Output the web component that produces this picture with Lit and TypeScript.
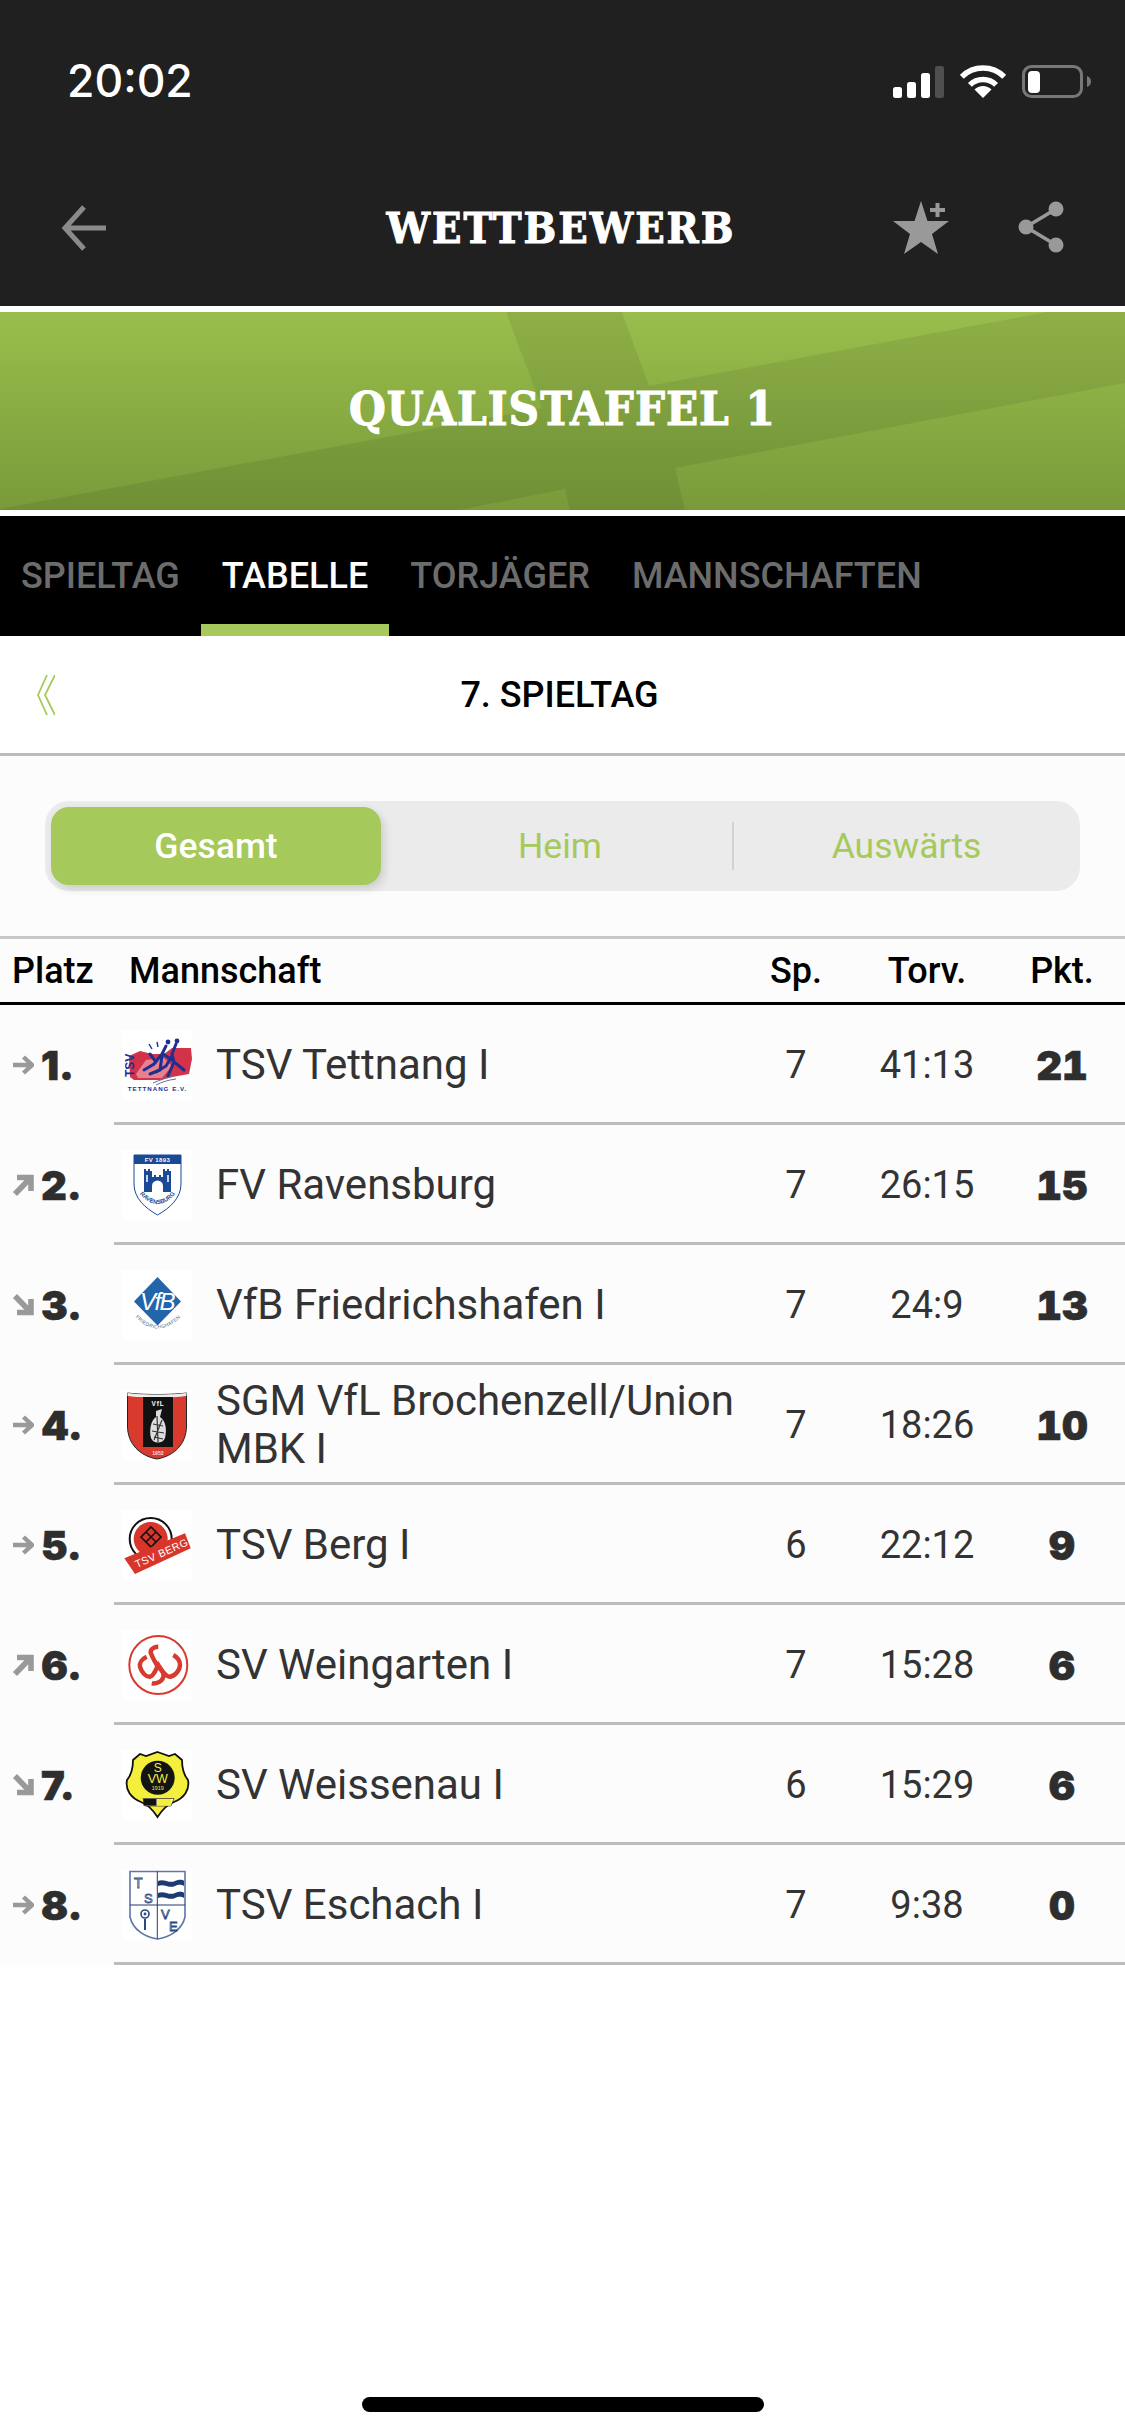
import { LitElement, html, css, svg } from "lit";
import { customElement } from "lit/decorators.js";

type Row = { rank: number; trend: "same" | "up" | "down"; name: string; sp: number; tor: string; pkt: number };

const rows: Row[] = [
  { rank: 1, trend: "same", name: "TSV Tettnang I", sp: 7, tor: "41:13", pkt: 21 },
  { rank: 2, trend: "up", name: "FV Ravensburg", sp: 7, tor: "26:15", pkt: 15 },
  { rank: 3, trend: "down", name: "VfB Friedrichshafen I", sp: 7, tor: "24:9", pkt: 13 },
  { rank: 4, trend: "same", name: "SGM VfL Brochenzell/Union MBK I", sp: 7, tor: "18:26", pkt: 10 },
  { rank: 5, trend: "same", name: "TSV Berg I", sp: 6, tor: "22:12", pkt: 9 },
  { rank: 6, trend: "up", name: "SV Weingarten I", sp: 7, tor: "15:28", pkt: 6 },
  { rank: 7, trend: "down", name: "SV Weissenau I", sp: 6, tor: "15:29", pkt: 6 },
  { rank: 8, trend: "same", name: "TSV Eschach I", sp: 7, tor: "9:38", pkt: 0 },
];

const SANS = "Liberation Sans, sans-serif";

const logos = [
  // TSV Tettnang
  svg`<polygon points="7,26 18,21 30,24 42,24 50,18 69,18 70,29 67,44 50,47 38,50 12,50 8,47" fill="#d2334a"/>
      <polygon points="14,44 24,30 42,28 50,36 40,48 16,48" fill="#e7808f"/>
      <text transform="translate(11.5,47)rotate(-90)" font-family="${SANS}" font-weight="700" font-size="12" fill="#1f2f8f">TSV</text>
      <path d="M22 40 L32 34 L40 24 L44 16 M41 24 L50 30 M34 32 L28 24 M40 26 L38 40 L28 44" fill="none" stroke="#1f2f8f" stroke-width="3" stroke-linecap="round"/>
      <path d="M54 14 L50 24 L52 32 L62 40 M50 26 L44 36 L34 42 M52 32 L46 46" fill="none" stroke="#1f2f8f" stroke-width="3" stroke-linecap="round"/>
      <circle cx="46" cy="12" r="2.4" fill="#1f2f8f"/><circle cx="55" cy="11" r="2.4" fill="#1f2f8f"/>
      <path d="M27 14 L30 19 M35 12 L36 17" stroke="#1f2f8f" stroke-width="1.4"/>
      <path d="M31 53 C38 50 44 48 52 46 M34 55 C40 52 46 50 54 49" fill="none" stroke="#67708f" stroke-width="1"/>
      <text x="35.5" y="60.5" text-anchor="middle" font-family="${SANS}" font-weight="700" font-size="6.2" letter-spacing="1" fill="#1f2f8f">TETTNANG E.V.</text>`,
  // FV Ravensburg
  svg`<path d="M12 5 H59 V34 C59 48 48 58 35.5 65 C23 58 12 48 12 34 Z" fill="#fff" stroke="#1b4a94" stroke-width="1"/>
      <rect x="12" y="5" width="47" height="9" fill="#1b4a94"/>
      <text x="35.5" y="12" text-anchor="middle" font-family="${SANS}" font-weight="700" font-size="6" letter-spacing=".4" fill="#fff">FV 1893</text>
      <path d="M22 42 V19 H24 V21 H26 V19 H28 V21 H30 V19 V27 H32 V25 H34 V27 H37 V25 H39 V27 H41 V19 H43 V21 H45 V19 H47 V21 H49 V19 V42 H41 V36 A5.5 5.5 0 0 0 30 36 V42 Z" fill="#1b4a94"/>
      <path d="M25 25 V32 M46 25 V32" stroke="#fff" stroke-width="1.5"/>
      <path id="rv-arc" d="M16 42 Q35.5 66 55 42" fill="none"/>
      <text font-family="${SANS}" font-weight="700" font-size="6" fill="#1b4a94"><textPath href="#rv-arc" startOffset="50%" text-anchor="middle">RAVENSBURG</textPath></text>`,
  // VfB Friedrichshafen
  svg`<polygon points="35.5,7 59,31.5 35.5,55.5 12,31.5" fill="#2265ab"/>
      <text x="35" y="40" text-anchor="middle" font-family="${SANS}" font-style="italic" font-size="24" letter-spacing="-1.5" fill="#fff">VfB</text>
      <path id="vf-arc" d="M13 47 Q35.5 70 59 47" fill="none"/>
      <text font-family="${SANS}" font-size="5" letter-spacing=".3" fill="#55708f"><textPath href="#vf-arc" startOffset="50%" text-anchor="middle">FRIEDRICHSHAFEN</textPath></text>`,
  // VfL Brochenzell
  svg`<path d="M5.5 3 C20 5 50 5 64.5 3 V36 C64.5 54 52 66 35 69 C18 66 5.5 54 5.5 36 Z" fill="#d93a2e" stroke="#222" stroke-width="1"/>
      <path d="M5.5 3 C20 5 50 5 64.5 3 L64.5 6 C50 8 20 8 5.5 6 Z" fill="#eee"/>
      <rect x="21" y="7" width="30" height="50" fill="#111"/>
      <text x="36" y="16" text-anchor="middle" font-family="${SANS}" font-weight="700" font-size="6.5" letter-spacing=".8" fill="#fff">VfL</text>
      <path d="M34 21 L40 19 L38 27 C44 31 45 40 43 48 C41 54 31 54 29 48 C27 40 29 30 34 27 Z" fill="#ddd"/>
      <path d="M31 34 L41 36 M30 41 L42 43 M32 47 L41 49 M35 26 L36 52 M40 30 L32 50" stroke="#333" stroke-width="1.2"/>
      <text x="36" y="65" text-anchor="middle" font-family="${SANS}" font-weight="700" font-size="5.2" fill="#f3dcd8">1952</text>`,
  // TSV Berg
  svg`<circle cx="28.7" cy="29" r="21" fill="#fff" stroke="#111" stroke-width="2"/>
      <circle cx="28.7" cy="29" r="17" fill="#d8352b"/>
      <path d="M19 27 L29 17 L39 27 L29 37 Z M24 22 L34 32 M34 22 L24 32" fill="none" stroke="#111" stroke-width="1.6"/>
      <polygon points="2.3,48.3 63,23.3 68.7,38.3 13,64" fill="#d8352b"/>
      <text transform="translate(15,58)rotate(-24)" font-family="${SANS}" font-size="10.5" letter-spacing=".5" fill="#fff">TSV BERG</text>`,
  // SV Weingarten
  svg`<circle cx="36.3" cy="35" r="29" fill="#fff" stroke="#d83a2e" stroke-width="2"/>
      <path d="M36.3 16.7 C30 17 27 21 29.7 25 C31 29 33 31 34.7 35 C37 39 43 41 41.3 47 C40 52 34 54 29.7 53.3" fill="none" stroke="#d83a2e" stroke-width="4.4"/>
      <path d="M24.7 26.7 C20 29 17 33 18 37 C20 43 24 47 28 46.7 C32 46 34 39 36.3 35 C39 39 43 47 48 46.7 C53 46 58 40 58 35 C58 31 55 27 51.3 25" fill="none" stroke="#d83a2e" stroke-width="4.4"/>`,
  // SV Weissenau
  svg`<path d="M35.5 2 L47 6 L53 4 L60 10 C60 18 61 24 66 30 C68 40 62 48 52 52 C44 55 40 60 35.5 67 C31 60 27 55 19 52 C9 48 3 40 5 30 C10 24 11 18 11 10 L18 4 L24 6 Z" fill="#f4ef3c" stroke="#111" stroke-width="1.8"/>
      <circle cx="35.7" cy="27.7" r="17" fill="#141414"/>
      <text x="35.7" y="22" text-anchor="middle" font-family="${SANS}" font-size="12" fill="#f4ef3c">S</text>
      <text x="35.7" y="32.5" text-anchor="middle" font-family="${SANS}" font-size="12.5" fill="#f4ef3c">VW</text>
      <text x="35.7" y="40" text-anchor="middle" font-family="${SANS}" font-size="5.4" fill="#f4ef3c">1919</text>
      <polygon points="21,48.5 52,48.5 49,56 23,56" fill="#fff" stroke="#222" stroke-width=".7"/>
      <rect x="21.5" y="49" width="13" height="6.6" fill="#111"/>
      <rect x="35" y="49" width="14" height="6.6" fill="#f4ef3c"/>`,
  // TSV Eschach
  svg`<path d="M8 1.5 H63 V47 C60 60 48 67 35.5 69 C23 67 11 60 8 47 Z" fill="#fff" stroke="#5d76a8" stroke-width="1.6"/>
      <path d="M35.3 1.5 V68.5 M8 35 H63" stroke="#22396f" stroke-width="1"/>
      <path d="M36 11 C42 8 47 14 53 11 C56 10 60 9 62 11 V16 C58 14 56 15 53 16 C47 19 42 13 36 16 Z" fill="#1e3a73"/>
      <path d="M36 23 C42 20 47 26 53 23 C56 22 60 21 62 23 V28 C58 26 56 27 53 28 C47 31 42 25 36 28 Z" fill="#1e3a73"/>
      <g font-family="${SANS}" fill="#fff" stroke="#2c477f" stroke-width=".8">
        <text x="12" y="18" font-size="14">T</text><text x="22" y="33" font-size="13">S</text>
        <text x="39" y="49" font-size="13">V</text><text x="47" y="61" font-size="13">E</text>
      </g>
      <circle cx="23" cy="44" r="4" fill="none" stroke="#2c477f" stroke-width="1.6"/>
      <circle cx="23" cy="44" r="1.4" fill="#2c477f"/>
      <path d="M23 49 V60" stroke="#2c477f" stroke-width="2"/>`,
];

const trendPaths: Record<string, unknown> = {
  same: svg`<path d="M1 11 H19 M11.5 3 L20 11 L11.5 19" fill="none" stroke="currentColor" stroke-width="4.4"/>`,
  up: svg`<path d="M3 20 L18 4.5 M5 3.5 H19 V17" fill="none" stroke="currentColor" stroke-width="5.6"/>`,
  down: svg`<path d="M3 2 L18 17.5 M5 18.5 H19 V5" fill="none" stroke="currentColor" stroke-width="5.6"/>`,
};

@customElement("app-root")
export class AppRoot extends LitElement {
  static styles = css`
    :host {
      display: flex;
      flex-direction: column;
      width: 1125px;
      min-height: 2436px;
      background: #fff;
      font-family: Roboto, "Liberation Sans", sans-serif;
      color: #000;
    }
    svg { display: block; flex: none; }
    .top { background: #202020; height: 306px; }
    .status {
      height: 150px;
      box-sizing: border-box;
      padding: 12px 34px 0 67px;
      display: flex;
      align-items: center;
      justify-content: space-between;
      color: #fff;
    }
    .time { font: 500 44.5px Inter, sans-serif; }
    .sys { display: flex; align-items: center; gap: 16px; }
    .nav {
      height: 156px;
      display: grid;
      grid-template-columns: 1fr auto 1fr;
      align-items: center;
    }
    .back { padding-left: 61px; }
    .title {
      font-family: "DejaVu Serif", serif;
      font-weight: 700;
      font-stretch: condensed;
      font-size: 43px;
      line-height: 1;
      letter-spacing: 2px;
      -webkit-text-stroke: 1px #fff;
      color: #fff;
      margin-right: 3px;
    }
    .actions { display: flex; justify-content: flex-end; gap: 69px; padding-right: 61px; }
    .banner {
      margin-top: 6px;
      height: 198px;
      display: grid;
      position: relative;
      background: linear-gradient(#8fb047, #6e8f35);
    }
    .banner svg { position: absolute; inset: 0; }
    .banner h1 {
      position: relative;
      margin: 0;
      padding-bottom: 6px;
      place-self: center;
      font-family: "DejaVu Serif", serif;
      font-weight: 700;
      font-stretch: condensed;
      font-size: 47px;
      line-height: 1;
      letter-spacing: 1px;
      -webkit-text-stroke: 1px #fff;
      color: #fff;
    }
    .tabs {
      margin-top: 6px;
      height: 120px;
      background: #000;
      display: flex;
    }
    .tab {
      box-sizing: border-box;
      padding: 12px 21px 0;
      display: flex;
      align-items: center;
      font-size: 36px;
      font-weight: 500;
      color: #6c6c6c;
      border-bottom: 12px solid transparent;
    }
    .tab.on { color: #fff; border-bottom-color: #a6c95b; }
    .day {
      height: 120px;
      box-sizing: border-box;
      border-bottom: 3px solid #bcbcbc;
      display: grid;
      grid-template-columns: 1fr auto 1fr;
      align-items: center;
      background: #fff;
    }
    .day .chev { padding-left: 37px; }
    .day .label { font-size: 36px; font-weight: 500; margin-right: 6px; }
    .body { background: #fcfcfc; }
    .seg-wrap {
      height: 183px;
      box-sizing: border-box;
      padding: 45px 45px 0;
      border-bottom: 3px solid #c8c8c8;
    }
    .seg {
      height: 90px;
      box-sizing: border-box;
      border-radius: 24px;
      background: #ebebeb;
      padding: 6px 0 6px 6px;
      display: grid;
      grid-template-columns: 330px 352px 1fr;
      align-items: stretch;
    }
    .seg span {
      display: flex;
      align-items: center;
      justify-content: center;
      font-size: 35.5px;
      font-weight: 400;
      color: #a6c95b;
    }
    .seg .on {
      background: #a6c95b;
      color: #fff;
      font-weight: 500;
      border-radius: 18px;
      box-shadow: 3px 4px 8px rgba(0, 0, 0, 0.13);
    }
    .seg .sep { position: relative; padding-left: 6px; }
    .seg .sep::after {
      content: "";
      position: absolute;
      right: -1px;
      top: 15px;
      bottom: 15px;
      width: 2px;
      background: #d2d2d2;
    }
    .cols, .main { display: grid; grid-template-columns: 1fr 118px 144px 126px; align-items: center; }
    .head {
      height: 66px;
      box-sizing: border-box;
      border-bottom: 3px solid #000;
      display: flex;
      align-items: center;
      font-size: 36px;
      font-weight: 500;
    }
    .head .platz { width: 129px; box-sizing: border-box; padding-left: 12px; }
    .head .cols { flex: 1; }
    .head .c { text-align: center; }
    .row { display: flex; height: 120px; }
    .rank {
      width: 114px;
      flex: none;
      box-sizing: border-box;
      padding-left: 12px;
      display: flex;
      align-items: center;
      gap: 7px;
      color: #2e2e2e;
      font: 900 40px Inter, sans-serif;
      -webkit-text-stroke: 0.6px #2e2e2e;
    }
    .trend { color: #999; -webkit-text-stroke: 0; }
    .main {
      flex: 1;
      box-sizing: border-box;
      padding-top: 3px;
      border-bottom: 3px solid #bcbcbc;
      font-size: 38px;
      color: #333;
    }
    .team { display: flex; align-items: center; }
    .logo { margin: 0 24px 0 8px; background: #fff; }
    .name { font-size: 42px; line-height: 48px; color: #333; }
    .c { text-align: center; }
    .pts {
      font: 900 40px Inter, sans-serif;
      font-variant-numeric: tabular-nums;
      -webkit-text-stroke: 0.6px #2e2e2e;
      color: #2e2e2e;
      text-align: center;
    }
    .home {
      margin: auto auto 24px;
      width: 402px;
      height: 15px;
      border-radius: 7.5px;
      background: #000;
    }
  `;

  private renderStatus() {
    return html`<div class="status">
      <div class="time">20:02</div>
      <div class="sys">
        <svg width="52" height="33" viewBox="0 0 52 33">
          <rect x="1" y="22" width="9" height="11" rx="2.5" fill="#fff"/>
          <rect x="15" y="17" width="9" height="16" rx="2.5" fill="#fff"/>
          <rect x="29" y="8" width="9" height="25" rx="2.5" fill="#fff"/>
          <rect x="43" y="1" width="9" height="32" rx="2.5" fill="#4f4f4f"/>
        </svg>
        <svg width="46" height="33" viewBox="0 0 46 33">
          <path d="M1.8 11.8 A30 30 0 0 1 44.2 11.8" fill="none" stroke="#fff" stroke-width="5.5"/>
          <path d="M9.9 19.9 A18.5 18.5 0 0 1 36.1 19.9" fill="none" stroke="#fff" stroke-width="5.5"/>
          <path d="M23 33 L14.5 24.5 A12 12 0 0 1 31.5 24.5 Z" fill="#fff"/>
        </svg>
        <svg width="69" height="33" viewBox="0 0 69 33">
          <rect x="1.5" y="1.5" width="58" height="30" rx="8" fill="none" stroke="#777" stroke-width="3"/>
          <rect x="6" y="6" width="12" height="22" rx="4" fill="#fff"/>
          <path d="M65 11 C68 12 69 14 69 16.5 C69 19 68 21 65 22 Z" fill="#777"/>
        </svg>
      </div>
    </div>`;
  }

  private renderNav() {
    return html`<div class="nav">
      <div class="back">
        <svg width="46" height="46" viewBox="0 0 46 46">
          <path d="M45 23 H4 M23 2 L4 23 L23 44" fill="none" stroke="#8a8a8a" stroke-width="5"/>
        </svg>
      </div>
      <div class="title">WETTBEWERB</div>
      <div class="actions">
        <svg width="56" height="54" viewBox="0 0 56 54">
          <polygon points="28,0 34.5,20 56,20 39,33 45,53 28,41 11,53 17,33 0,20 21.5,20" fill="#999"/>
          <path d="M37 9 H52 M44.5 2 V16" stroke="#999" stroke-width="4" fill="none"/>
        </svg>
        <svg width="46" height="52" viewBox="0 0 46 52">
          <path d="M38 8 L8 26 L38 44" fill="none" stroke="#999" stroke-width="3.6"/>
          <circle cx="38" cy="8" r="7.5" fill="#999"/>
          <circle cx="8" cy="26" r="7.5" fill="#999"/>
          <circle cx="38" cy="44" r="7.5" fill="#999"/>
        </svg>
      </div>
    </div>`;
  }

  private renderBanner() {
    return html`<div class="banner">
      <svg width="1125" height="198" viewBox="0 0 1125 198">
        <defs>
          <linearGradient id="lit" gradientUnits="userSpaceOnUse" x1="0" y1="0" x2="0" y2="198">
            <stop offset="0" stop-color="#9abe4c"/>
            <stop offset="1" stop-color="#799a3a"/>
          </linearGradient>
        </defs>
        <g fill="url(#lit)">
          <polygon points="0,0 506,0 542,96 0,197"/>
          <polygon points="622,0 1047,0 649,74"/>
          <polygon points="1125,71 675,156 685,198 1125,198"/>
          <polygon points="459,198 565,177 570,198"/>
        </g>
      </svg>
      <h1>QUALISTAFFEL 1</h1>
    </div>`;
  }

  private renderRow(r: Row, i: number) {
    return html`<div class="row">
      <div class="rank">
        <svg class="trend" width="22" height="22" viewBox="0 0 22 22">${trendPaths[r.trend]}</svg>
        <span>${r.rank}.</span>
      </div>
      <div class="main">
        <div class="team">
          <svg class="logo" width="70" height="70" viewBox="0 0 70 70">${logos[i]}</svg>
          <div class="name">${r.name}</div>
        </div>
        <div class="c">${r.sp}</div>
        <div class="c">${r.tor}</div>
        <div class="pts">${r.pkt}</div>
      </div>
    </div>`;
  }

  render() {
    return html`
      <div class="top">${this.renderStatus()}${this.renderNav()}</div>
      ${this.renderBanner()}
      <div class="tabs">
        <div class="tab">SPIELTAG</div>
        <div class="tab on">TABELLE</div>
        <div class="tab">TORJÄGER</div>
        <div class="tab">MANNSCHAFTEN</div>
      </div>
      <div class="day">
        <div class="chev">
          <svg width="18" height="42" viewBox="0 0 18 42">
            <path d="M10 1 L1 21 L10 41 M18 1 L8 21 L18 41" fill="none" stroke="#a6c95b" stroke-width="1.8"/>
          </svg>
        </div>
        <div class="label">7. SPIELTAG</div>
      </div>
      <div class="body">
        <div class="seg-wrap">
          <div class="seg">
            <span class="on">Gesamt</span>
            <span class="sep">Heim</span>
            <span>Auswärts</span>
          </div>
        </div>
        <div class="head">
          <div class="platz">Platz</div>
          <div class="cols">
            <div>Mannschaft</div>
            <div class="c">Sp.</div>
            <div class="c">Torv.</div>
            <div class="c">Pkt.</div>
          </div>
        </div>
        ${rows.map((r, i) => this.renderRow(r, i))}
      </div>
      <div class="home"></div>
    `;
  }
}
